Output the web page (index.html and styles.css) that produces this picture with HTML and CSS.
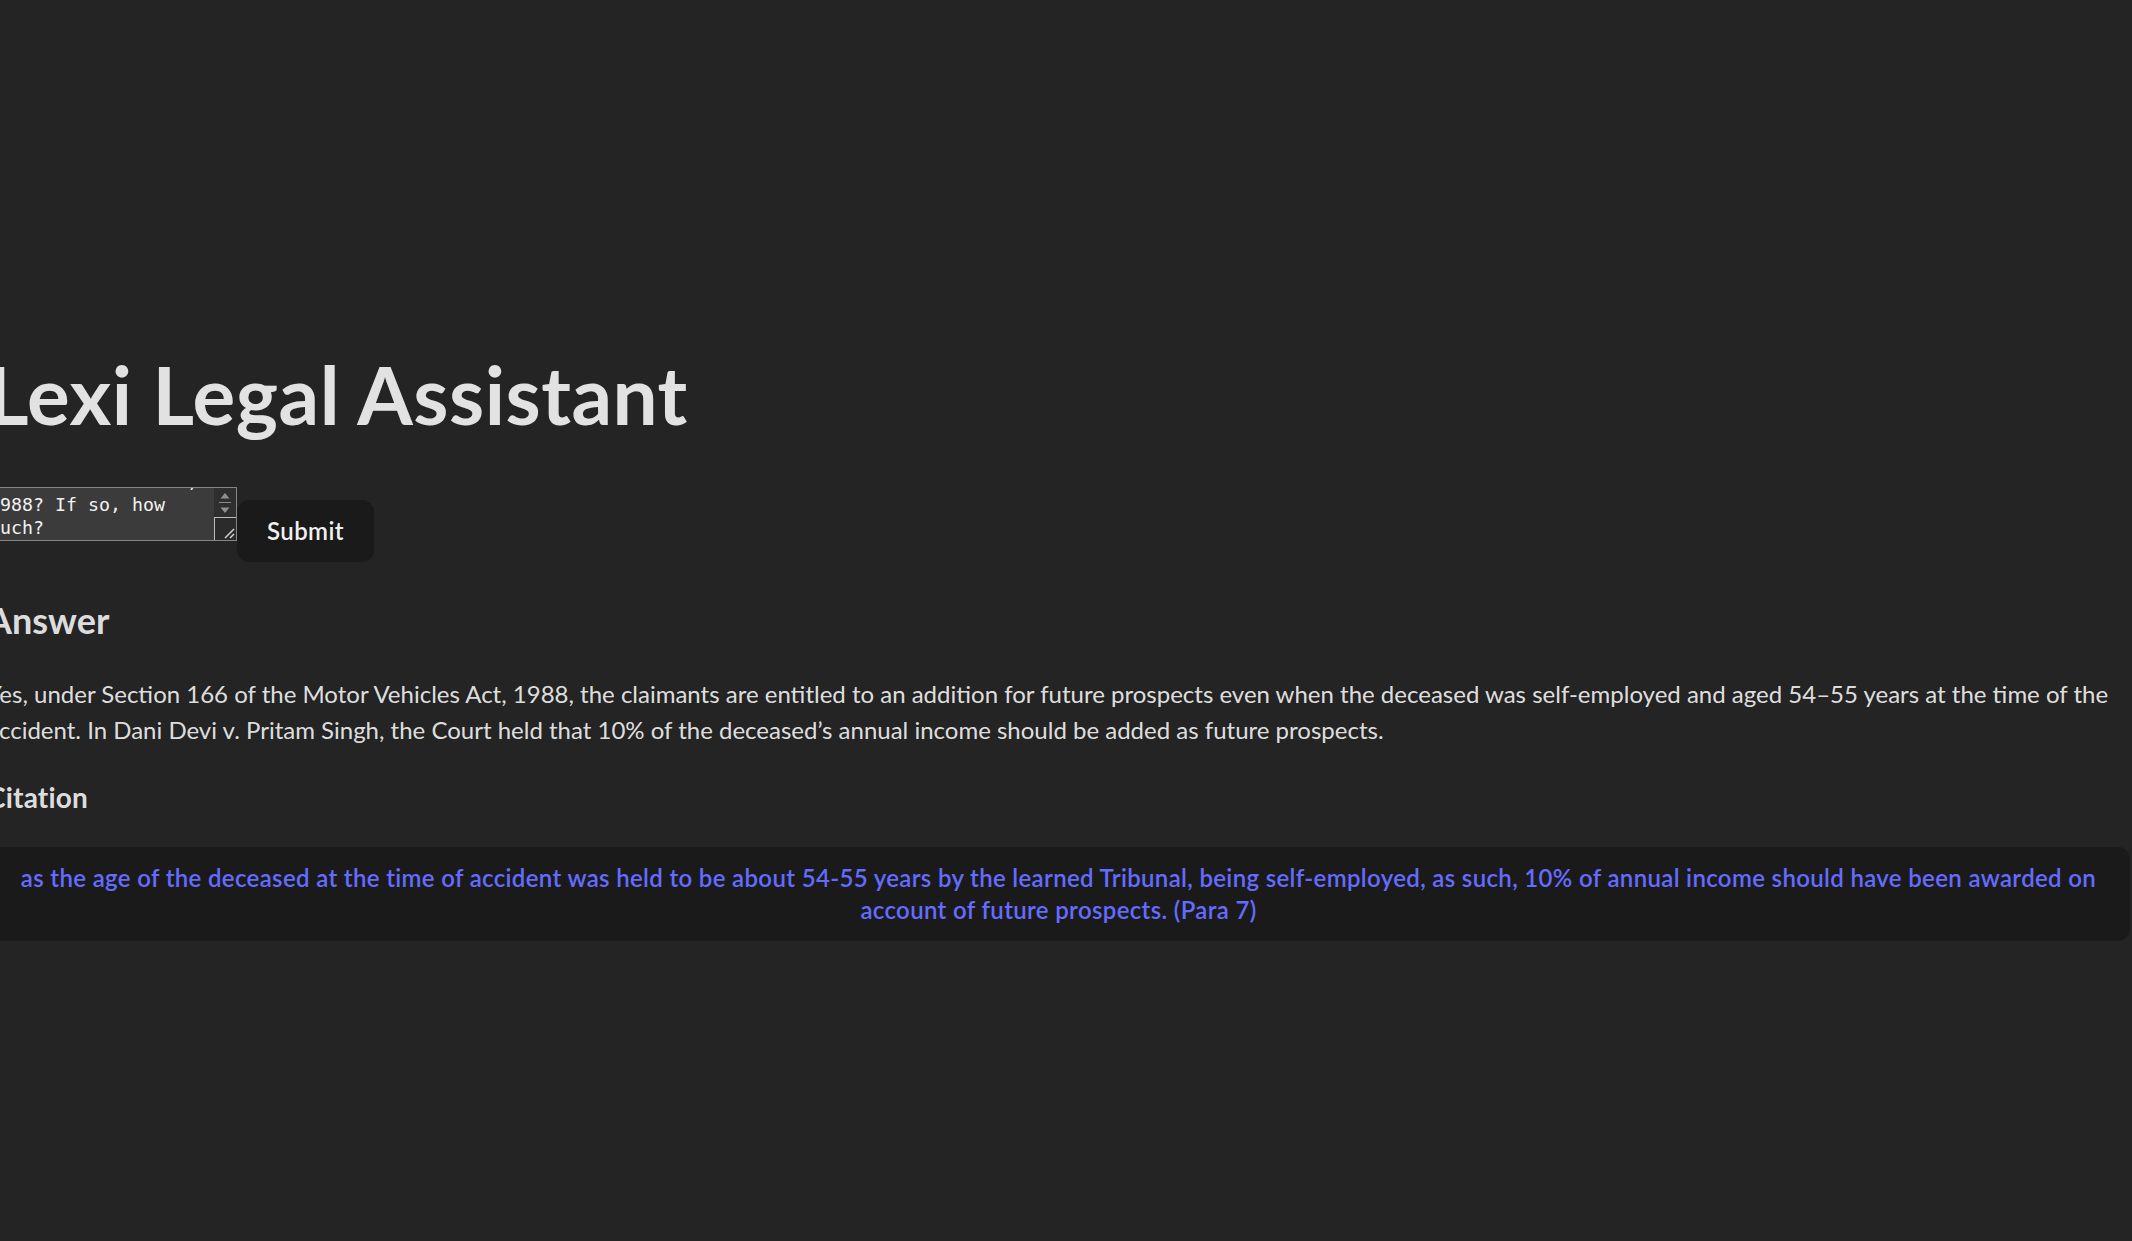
FILE: index.html
```html
<!DOCTYPE html>
<html lang="en">
<head>
<meta charset="utf-8">
<title>Lexi Legal Assistant</title>
<link rel="stylesheet" href="styles.css">
<script src="script.js" defer></script>
</head>
<body>
<div class="app">
  <h1 class="title">Lexi Legal Assistant</h1>
  <form class="ask">
    <div class="query-field">
      <textarea class="query" rows="2">Where the deceased was self-employed and aged 54-55, are the claimants entitled to an addition for future prospects under Section 166 of the Motor Vehicles Act, 1988? If so, how much?</textarea>
      <div class="scrollbar" aria-hidden="true">
        <svg width="22" height="52" viewBox="0 0 22 52">
          <rect x="0" y="0" width="22" height="52" fill="#2e2e2e"/>
          <polygon points="11,5 6.5,10.5 15.5,10.5" fill="#8f8f8f"/>
          <line x1="5" y1="14.5" x2="17" y2="14.5" stroke="#8a8a8a" stroke-width="1"/>
          <polygon points="6.5,19.5 15.5,19.5 11,25" fill="#8f8f8f"/>
          <rect x="0.5" y="29.5" width="23" height="24" fill="#2b2b2b" stroke="#bdbdbd" stroke-width="1"/>
          <line x1="11" y1="50" x2="20" y2="41" stroke="#d6d6d6" stroke-width="1.5"/>
          <line x1="16" y1="50" x2="20" y2="46" stroke="#d6d6d6" stroke-width="1.5"/>
        </svg>
      </div>
    </div>
    <button class="submit" type="button">Submit</button>
  </form>
  <section class="result">
    <h2 class="result-heading">Answer</h2>
    <p class="answer">Yes, under Section 166 of the Motor Vehicles Act, 1988, the claimants are entitled to an addition for future prospects even when the deceased was self-employed and aged 54–55 years at the time of the accident. In Dani Devi v. Pritam Singh, the Court held that 10% of the deceased’s annual income should be added as future prospects.</p>
    <h3 class="citation-heading">Citation</h3>
    <blockquote class="citation">as the age of the deceased at the time of accident was held to be about 54-55 years by the learned Tribunal, being self-employed, as such, 10% of annual income should have been awarded on account of future prospects. (Para 7)</blockquote>
  </section>
</div>
</body>
</html>
```

FILE: styles.css
```css
html {
  color-scheme: dark;
}
body {
  margin: 0;
  background: #242424;
  color: rgba(255, 255, 255, 0.87);
  font-family: Lato, "Open Sans", sans-serif;
  font-size: 24px;
  line-height: 1.5;
  overflow: hidden;
  height: 1241px;
}
.app {
  margin-left: -13px;
  width: 2143px;
  padding-top: 350px;
}
.title {
  margin: 0;
  font-size: 80px;
  line-height: 88px;
  font-weight: 700;
  letter-spacing: 0.5px;
}
.ask {
  display: flex;
  align-items: flex-start;
  margin-top: 49px;
}
.query-field {
  box-sizing: border-box;
  display: flex;
  width: 250px;
  height: 54px;
  border: 1px solid #858585;
  background: #3b3b3b;
}
.query {
  flex: 1;
  min-width: 0;
  margin: 0;
  padding: 0 0 1px 1px;
  border: 0;
  outline: none;
  resize: none;
  overflow: hidden;
  background: transparent;
  color: #f2f2f2;
  font-family: "DejaVu Sans Mono", monospace;
  font-size: 18.27px;
  line-height: 23px;
}
.scrollbar {
  flex: none;
  width: 22px;
  overflow: hidden;
  display: flex;
}
.submit {
  margin-top: 13px;
  padding: 14px 29px;
  border: 1px solid transparent;
  border-radius: 12px;
  background: #1a1a1a;
  color: rgba(255, 255, 255, 0.95);
  font-family: inherit;
  font-size: 24px;
  font-weight: 600;
  letter-spacing: 0.4px;
  line-height: 32px;
  cursor: pointer;
}
.result-heading {
  margin: 31px 0 0;
  font-size: 36px;
  line-height: 54px;
  font-weight: 700;
}
.answer {
  margin: 29px 0 0;
}
.citation-heading {
  margin: 28px 0 0;
  font-size: 28px;
  line-height: 42px;
  font-weight: 700;
  letter-spacing: 0.2px;
}
.citation {
  margin: 29px 0 0;
  padding: 15px 24px;
  border-radius: 12px;
  background: #1a1a1a;
  color: #646cff;
  font-weight: 600;
  letter-spacing: 0.34px;
  line-height: 32px;
  text-align: center;
}
```

FILE: script.js
```js
const q = document.querySelector('.query');
q.scrollTop = q.scrollHeight;
```
